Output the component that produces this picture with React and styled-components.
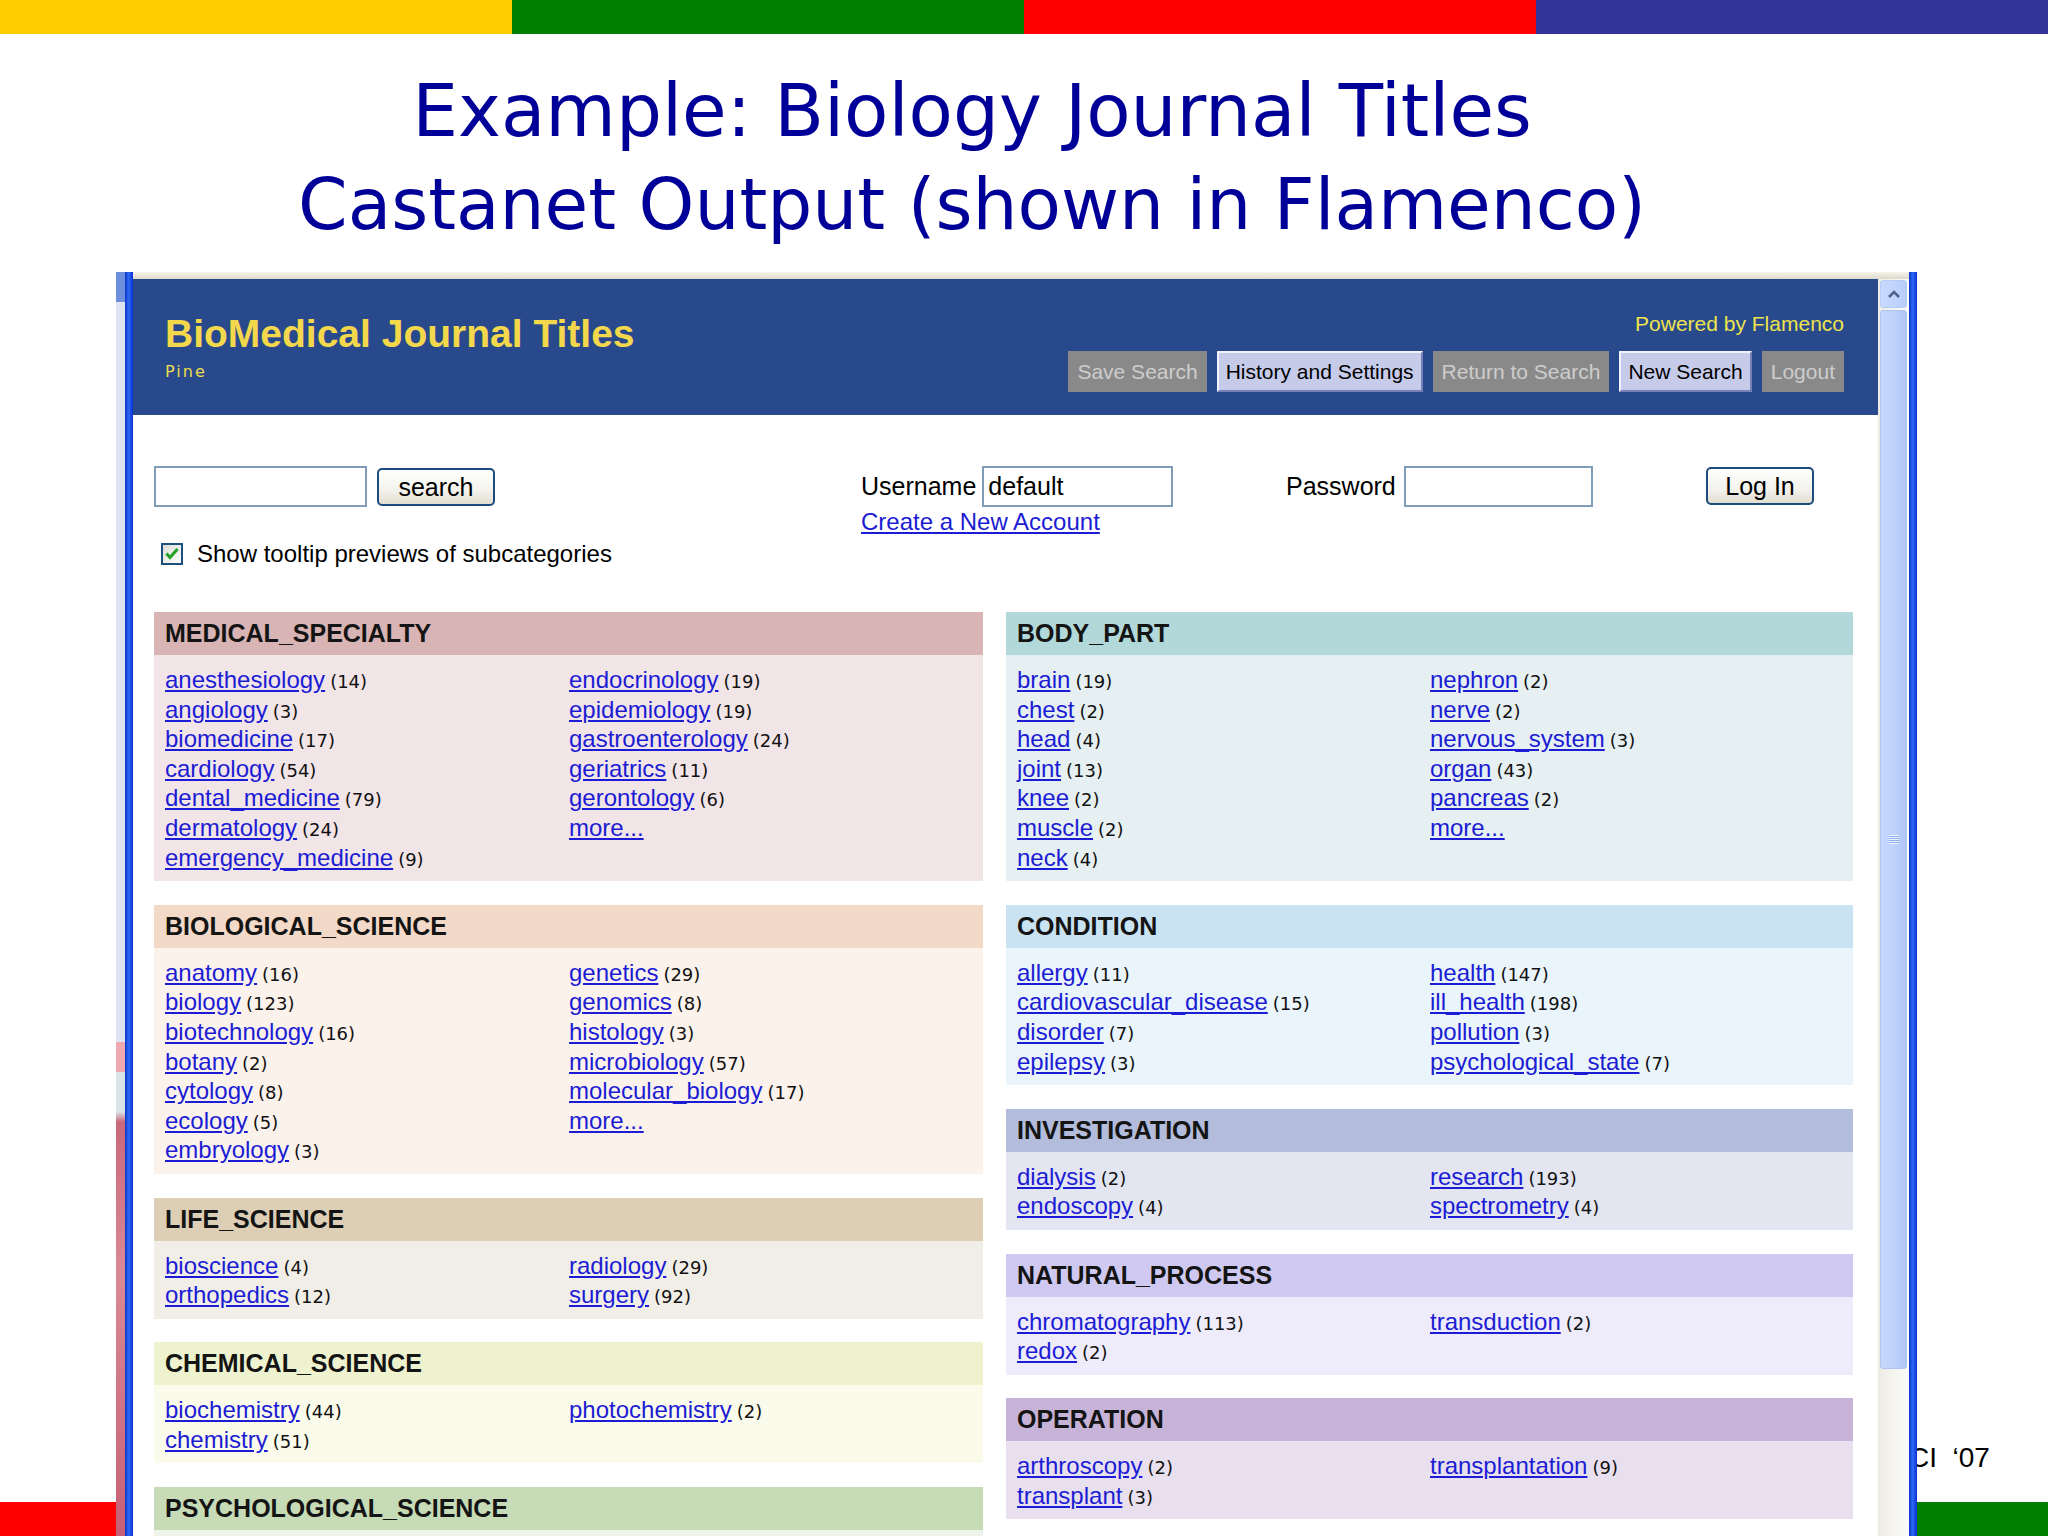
import React from 'react';
import styled, { createGlobalStyle } from 'styled-components';

const GlobalStyle = createGlobalStyle`
  html, body {
    margin: 0;
    padding: 0;
    background: #fff;
  }
  body {
    font-family: "Liberation Sans", Arial, sans-serif;
  }
`;

const facetsLeft = [
  {
    name: 'MEDICAL_SPECIALTY', head: '#d9b4b5', body: '#f2e5e7',
    cols: [
      [['anesthesiology', 14], ['angiology', 3], ['biomedicine', 17], ['cardiology', 54], ['dental_medicine', 79], ['dermatology', 24], ['emergency_medicine', 9]],
      [['endocrinology', 19], ['epidemiology', 19], ['gastroenterology', 24], ['geriatrics', 11], ['gerontology', 6], ['more...']],
    ],
  },
  {
    name: 'BIOLOGICAL_SCIENCE', head: '#f3d9c8', body: '#fbf2ec',
    cols: [
      [['anatomy', 16], ['biology', 123], ['biotechnology', 16], ['botany', 2], ['cytology', 8], ['ecology', 5], ['embryology', 3]],
      [['genetics', 29], ['genomics', 8], ['histology', 3], ['microbiology', 57], ['molecular_biology', 17], ['more...']],
    ],
  },
  {
    name: 'LIFE_SCIENCE', head: '#dccfb6', body: '#f1eee8',
    cols: [
      [['bioscience', 4], ['orthopedics', 12]],
      [['radiology', 29], ['surgery', 92]],
    ],
  },
  {
    name: 'CHEMICAL_SCIENCE', head: '#eef2cf', body: '#fafbeb',
    cols: [
      [['biochemistry', 44], ['chemistry', 51]],
      [['photochemistry', 2]],
    ],
  },
  {
    name: 'PSYCHOLOGICAL_SCIENCE', head: '#c6dbb6', body: '#eef4e9',
    cols: [[], []],
  },
];

const facetsRight = [
  {
    name: 'BODY_PART', head: '#b2d8d9', body: '#e6f0f2',
    cols: [
      [['brain', 19], ['chest', 2], ['head', 4], ['joint', 13], ['knee', 2], ['muscle', 2], ['neck', 4]],
      [['nephron', 2], ['nerve', 2], ['nervous_system', 3], ['organ', 43], ['pancreas', 2], ['more...']],
    ],
  },
  {
    name: 'CONDITION', head: '#c9e3f3', body: '#eaf5fb',
    cols: [
      [['allergy', 11], ['cardiovascular_disease', 15], ['disorder', 7], ['epilepsy', 3]],
      [['health', 147], ['ill_health', 198], ['pollution', 3], ['psychological_state', 7]],
    ],
  },
  {
    name: 'INVESTIGATION', head: '#b3bcda', body: '#e3e6f1',
    cols: [
      [['dialysis', 2], ['endoscopy', 4]],
      [['research', 193], ['spectrometry', 4]],
    ],
  },
  {
    name: 'NATURAL_PROCESS', head: '#cfc9f1', body: '#eeebfb',
    cols: [
      [['chromatography', 113], ['redox', 2]],
      [['transduction', 2]],
    ],
  },
  {
    name: 'OPERATION', head: '#c7b3d8', body: '#e8e0ee',
    cols: [
      [['arthroscopy', 2], ['transplant', 3]],
      [['transplantation', 9]],
    ],
  },
];

const Slide = styled.div`
  position: relative;
  width: 2048px;
  height: 1536px;
  overflow: hidden;
  display: flex;
  flex-direction: column;
  background: #fff;
`;

const ColorBar = styled.div`
  display: grid;
  grid-template-columns: repeat(4, 1fr);
  height: 34px;
  flex-shrink: 0;
`;

const Stripe = styled.div`
  background: ${p => p.$color};
`;

const Title = styled.h1`
  margin: 30px 104px 0 0;
  font-family: "DejaVu Sans", sans-serif;
  font-weight: normal;
  font-size: 71px;
  line-height: 94px;
  color: #000099;
  text-align: center;
  white-space: nowrap;
`;

const TitleLine = styled.div`
  font-size: ${p => p.$size}px;
`;

const Spacer = styled.div`
  flex: 1;
`;

const FooterNote = styled.div`
  position: absolute;
  left: 1909px;
  top: 1444px;
  z-index: 1;
  font-size: 28px;
  line-height: 28px;
  color: #000;
  white-space: pre;
`;

const BrowserWindow = styled.div`
  position: absolute;
  left: 116px;
  top: 272px;
  width: 1801px;
  height: 1300px;
  display: flex;
  z-index: 2;
`;

const Sliver = styled.div`
  width: 9px;
  background: linear-gradient(to bottom, #6d8fdc 0, #6d8fdc 30px, #dde4f3 30px, #dde4f3 770px,
    #f0a9b0 770px, #f0a9b0 800px, #d9e4e6 800px, #d9e4e6 840px, #c9687b 850px, #d98995 1000px, #c45a70 100%);
`;

const Frame = styled.div`
  width: 8px;
  background: linear-gradient(to right, #0a34c8, #2f68f2 45%, #0831d9);
`;

const WindowInner = styled.div`
  flex: 1;
  min-width: 0;
  display: flex;
  flex-direction: column;
`;

const TopEdge = styled.div`
  height: 7px;
  background: linear-gradient(#f6f4ec, #ddd9c9);
`;

const Viewport = styled.div`
  flex: 1;
  display: flex;
  min-height: 0;
  background: #fff;
`;

const Page = styled.div`
  flex: 1;
  min-width: 0;
`;

const Scrollbar = styled.div`
  width: 31px;
  flex-shrink: 0;
  box-sizing: border-box;
  padding: 1px 2px 0;
  display: flex;
  flex-direction: column;
  gap: 2px;
  background: linear-gradient(to right, #edebe3, #fcfcfa);
`;

const ScrollButton = styled.div`
  height: 26px;
  border: 1px solid #b8cbf6;
  border-radius: 3px;
  background: linear-gradient(to right, #c9daff, #b7cdf9);
  display: flex;
  align-items: center;
  justify-content: center;
`;

const ScrollThumb = styled.div`
  height: 1057px;
  border: 1px solid #aec4f3;
  border-radius: 3px;
  background: linear-gradient(to right, #c8d8fb, #bcd0fa 60%, #b0c6f6);
  display: flex;
  align-items: center;
  justify-content: center;
`;

const Grip = styled.div`
  width: 10px;
  height: 9px;
  background: repeating-linear-gradient(to bottom, #eef3fe 0, #eef3fe 1px, #8eaef2 1px, #8eaef2 2px);
`;

const Header = styled.header`
  height: 136px;
  box-sizing: border-box;
  padding: 32px 34px 0 32px;
  background: #284a8c;
  display: flex;
  justify-content: space-between;
`;

const Brand = styled.div`
  display: flex;
  flex-direction: column;
`;

const BrandTitle = styled.div`
  font-size: 39px;
  line-height: 45px;
  font-weight: bold;
  color: #f4d84c;
`;

const BrandSub = styled.div`
  margin-top: 6px;
  font-family: "DejaVu Sans", sans-serif;
  font-size: 16px;
  line-height: 20px;
  letter-spacing: 2px;
  color: #efdb4f;
`;

const HeaderRight = styled.div`
  padding-top: 1px;
  display: flex;
  flex-direction: column;
  align-items: flex-end;
`;

const Powered = styled.div`
  font-size: 21px;
  line-height: 24px;
  color: #eee44c;
`;

const ButtonRow = styled.div`
  margin-top: 15px;
  display: flex;
  gap: 10px;
`;

const NavButton = styled.div`
  height: 41px;
  box-sizing: border-box;
  padding: 0 7px;
  display: flex;
  align-items: center;
  font-size: 21px;
  white-space: nowrap;
  border: 2px solid;
  background: ${p => (p.$active ? '#c6cbea' : '#898989')};
  color: ${p => (p.$active ? '#000' : '#cdcdcd')};
  border-color: ${p => (p.$active ? '#f1f2fb #7880b8 #7880b8 #f1f2fb' : '#898989')};
`;

const Content = styled.div`
  padding: 51px 24px 0 21px;
`;

const FormGrid = styled.div`
  display: grid;
  grid-template-columns: 707px 425px 420px 1fr;
  align-items: start;
`;

const Cell = styled.div`
  display: flex;
  flex-direction: column;
`;

const FieldRow = styled.div`
  display: flex;
  align-items: center;
  gap: ${p => p.$gap || 6}px;
`;

const TextInput = styled.input`
  width: ${p => p.$w}px;
  height: 41px;
  box-sizing: border-box;
  margin: 0;
  padding: 0 4px;
  border: 2px solid #7f9db9;
  background: #fff;
  font-family: "Liberation Sans", Arial, sans-serif;
  font-size: 25px;
  color: #000;
  outline: none;
`;

const XpButton = styled.button`
  width: ${p => p.$w}px;
  height: 38px;
  margin: 1px 0 0;
  padding: 0;
  border: 2px solid #1e4b7e;
  border-radius: 5px;
  background: linear-gradient(#ffffff, #f3f2ec 60%, #e1ddcf);
  font-family: "Liberation Sans", Arial, sans-serif;
  font-size: 25px;
  color: #000;
`;

const Label = styled.span`
  font-size: 25px;
  color: #000;
`;

const AccountLink = styled.a`
  margin-top: 1px;
  font-size: 24px;
  line-height: 28px;
  color: #1c1cd4;
  text-decoration: underline;
`;

const CheckRow = styled.label`
  margin: 4px 0 0 7px;
  display: flex;
  align-items: center;
  gap: 14px;
  font-size: 24px;
  line-height: 28px;
  color: #000;
`;

const Columns = styled.div`
  margin-top: 44px;
  display: grid;
  grid-template-columns: 829px 847px;
  column-gap: 23px;
  align-items: start;
`;

const Column = styled.div`
  display: flex;
  flex-direction: column;
  gap: 23.6px;
`;

const FacetHead = styled.div`
  height: 43px;
  box-sizing: border-box;
  padding-left: 11px;
  display: flex;
  align-items: center;
  background: ${p => p.$bg};
  font-size: 25px;
  font-weight: bold;
  color: #141414;
`;

const FacetBody = styled.div`
  min-height: 59px;
  padding: 10px 10px 9px 11px;
  display: grid;
  grid-template-columns: 1fr 1fr;
  background: ${p => p.$bg};
`;

const ItemCol = styled.div`
  display: flex;
  flex-direction: column;
`;

const Item = styled.div`
  height: 29.6px;
  line-height: 29.6px;
  white-space: nowrap;
`;

const FacetLink = styled.a`
  font-size: 24px;
  color: #1c1cd4;
  text-decoration: underline;
`;

const Count = styled.span`
  margin-left: 5px;
  font-family: "DejaVu Sans", sans-serif;
  font-size: 18px;
  color: #111;
`;

function CheckIcon() {
  return (
    <svg width="22" height="22" viewBox="0 0 22 22">
      <defs>
        <linearGradient id="cbg" x1="0" y1="0" x2="1" y2="1">
          <stop offset="0" stopColor="#dcdcd4" />
          <stop offset="1" stopColor="#ffffff" />
        </linearGradient>
      </defs>
      <rect x="1" y="1" width="20" height="20" fill="url(#cbg)" stroke="#1c5180" strokeWidth="2" />
      <path d="M5.5 10.5 L9 14.5 L16.5 6" fill="none" stroke="#21a121" strokeWidth="3" />
    </svg>
  );
}

function UpArrow() {
  return (
    <svg width="12" height="8" viewBox="0 0 12 8">
      <path d="M1 7 L6 2 L11 7" fill="none" stroke="#4d6185" strokeWidth="2.5" />
    </svg>
  );
}

function Facet({ facet }) {
  return (
    <div>
      <FacetHead $bg={facet.head}>{facet.name}</FacetHead>
      <FacetBody $bg={facet.body}>
        {facet.cols.map((col, ci) => (
          <ItemCol key={ci}>
            {col.map(([label, count]) => (
              <Item key={label}>
                <FacetLink href="#">{label}</FacetLink>
                {count !== undefined && <Count>({count})</Count>}
              </Item>
            ))}
          </ItemCol>
        ))}
      </FacetBody>
    </div>
  );
}

export default function App() {
  return (
    <>
      <GlobalStyle />
      <Slide>
        <ColorBar>
          <Stripe $color="#ffcc00" />
          <Stripe $color="#008000" />
          <Stripe $color="#ff0000" />
          <Stripe $color="#333399" />
        </ColorBar>
        <Title>
          <TitleLine $size={72.5}>Example: Biology Journal Titles</TitleLine>
          <TitleLine $size={71}>Castanet Output (shown in Flamenco)</TitleLine>
        </Title>
        <Spacer />
        <ColorBar>
          <Stripe $color="#ff0000" />
          <Stripe $color="#333399" />
          <Stripe $color="#ffcc00" />
          <Stripe $color="#008000" />
        </ColorBar>
        <FooterNote>{'CI\u00a0\u00a0\u201807'}</FooterNote>

        <BrowserWindow>
          <Sliver />
          <Frame />
          <WindowInner>
            <TopEdge />
            <Viewport>
              <Page>
                <Header>
                  <Brand>
                    <BrandTitle>BioMedical Journal Titles</BrandTitle>
                    <BrandSub>Pine</BrandSub>
                  </Brand>
                  <HeaderRight>
                    <Powered>Powered by Flamenco</Powered>
                    <ButtonRow>
                      <NavButton>Save Search</NavButton>
                      <NavButton $active>History and Settings</NavButton>
                      <NavButton>Return to Search</NavButton>
                      <NavButton $active>New Search</NavButton>
                      <NavButton>Logout</NavButton>
                    </ButtonRow>
                  </HeaderRight>
                </Header>

                <Content>
                  <FormGrid>
                    <Cell>
                      <FieldRow $gap={10}>
                        <TextInput $w={213} readOnly value="" />
                        <XpButton $w={118}>search</XpButton>
                      </FieldRow>
                    </Cell>
                    <Cell>
                      <FieldRow $gap={6}>
                        <Label>Username</Label>
                        <TextInput $w={191} readOnly value="default" />
                      </FieldRow>
                      <AccountLink href="#">Create a New Account</AccountLink>
                    </Cell>
                    <Cell>
                      <FieldRow $gap={8}>
                        <Label>Password</Label>
                        <TextInput $w={189} readOnly value="" />
                      </FieldRow>
                    </Cell>
                    <Cell>
                      <FieldRow>
                        <XpButton $w={108}>Log In</XpButton>
                      </FieldRow>
                    </Cell>
                  </FormGrid>
                  <CheckRow>
                    <CheckIcon />
                    Show tooltip previews of subcategories
                  </CheckRow>

                  <Columns>
                    <Column>
                      {facetsLeft.map(f => <Facet key={f.name} facet={f} />)}
                    </Column>
                    <Column>
                      {facetsRight.map(f => <Facet key={f.name} facet={f} />)}
                    </Column>
                  </Columns>
                </Content>
              </Page>
              <Scrollbar>
                <ScrollButton><UpArrow /></ScrollButton>
                <ScrollThumb><Grip /></ScrollThumb>
              </Scrollbar>
            </Viewport>
          </WindowInner>
          <Frame />
        </BrowserWindow>
      </Slide>
    </>
  );
}
